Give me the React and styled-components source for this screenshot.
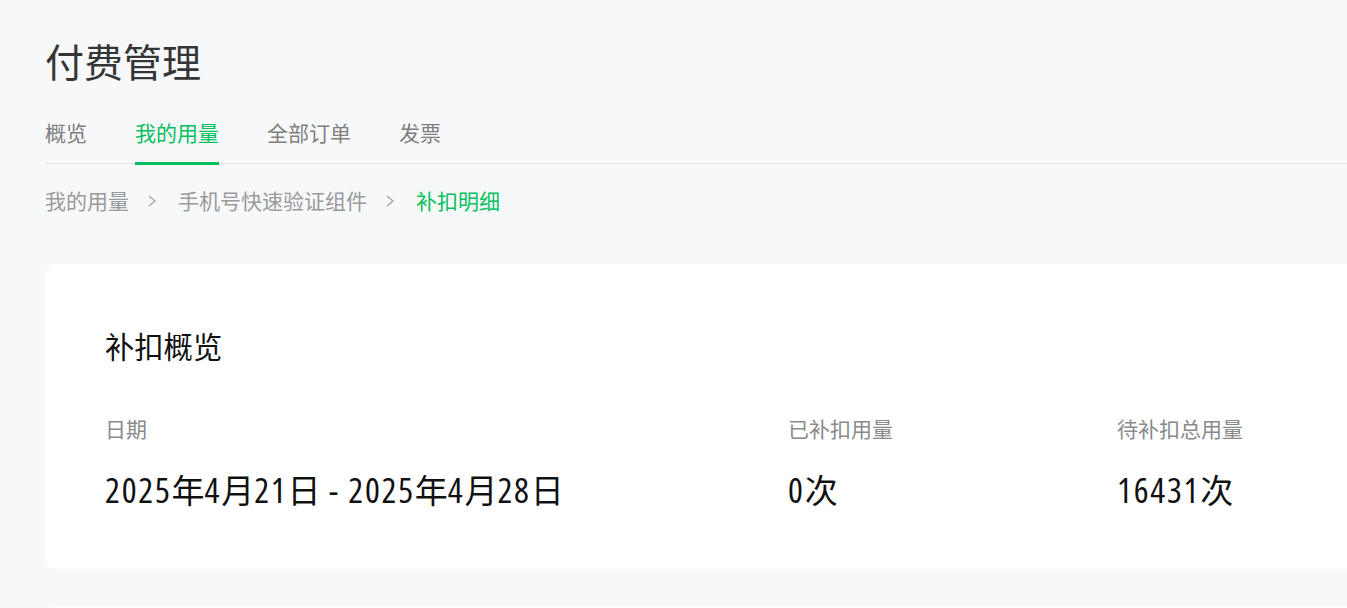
import styled, { createGlobalStyle } from "styled-components";

const GlobalStyle = createGlobalStyle`
  html, body {
    margin: 0;
    padding: 0;
    background: #f7f8fa;
    overflow: hidden;
  }
  body {
    font-family: "Noto Sans", "Noto Sans CJK SC", sans-serif;
    -webkit-font-smoothing: antialiased;
  }
`;

const Page = styled.div`
  width: 1420px;
  padding-left: 45px;
  box-sizing: border-box;
`;

const Title = styled.h1`
  margin: 0;
  padding-top: 34px;
  font-size: 39px;
  line-height: 56px;
  font-weight: 400;
  color: #353535;
`;

const Tabs = styled.div`
  display: flex;
  gap: 48px;
  padding-top: 28px;
  border-bottom: 1px solid #e3e4e6;
`;

const Tab = styled.div`
  font-size: 21px;
  line-height: 30px;
  padding-bottom: 14px;
  margin-bottom: -2px;
  color: ${(props) => (props.active ? "#07c160" : "#7f7f7f")};
  border-bottom: 3px solid
    ${(props) => (props.active ? "#07c160" : "transparent")};
`;

const Crumbs = styled.div`
  display: flex;
  align-items: center;
  padding-top: 22px;
  font-size: 21px;
  line-height: 30px;
`;

const Crumb = styled.span`
  color: ${(props) => (props.current ? "#07c160" : "#9a9a9a")};
`;

const Arrow = styled.svg`
  width: 8px;
  height: 12px;
  margin: 0 22px 0 19px;
`;

const Card = styled.section`
  background: #fff;
  border-radius: 10px;
  margin-top: 48px;
  padding: 62px 60px 57px;
`;

const CardTitle = styled.h2`
  margin: 0;
  font-size: 29.3px;
  line-height: 42px;
  font-weight: 400;
  color: #111;
`;

const Stats = styled.div`
  display: grid;
  grid-template-columns: 683px 329px 1fr;
  margin-top: 46px;
`;

const Label = styled.div`
  font-size: 21px;
  line-height: 30px;
  color: #8a8a8a;
`;

const Value = styled.div`
  margin-top: 23px;
  font-family: "Noto Sans CJK SC", sans-serif;
  font-size: 33px;
  line-height: 44px;
  color: #111;
`;

const Num = styled.span`
  font-family: "Open Sans", "Noto Sans", sans-serif;
  font-stretch: 75%;
  font-size: 35px;
  letter-spacing: 1.75px;
`;

const NextCard = styled.section`
  background: #fff;
  border-radius: 10px;
  margin-top: 37px;
  height: 200px;
`;

const Chevron = () => (
  <Arrow viewBox="0 0 8 12">
    <polyline
      points="1,1 7,6 1,11"
      fill="none"
      stroke="#a6a6a6"
      strokeWidth="1.3"
    />
  </Arrow>
);

const splitDigits = (text) =>
  text
    .split(/([0-9 \-]+)/)
    .filter(Boolean)
    .map((part, i) =>
      /[0-9]/.test(part) || part.trim() === "-" ? (
        <Num key={i}>{part}</Num>
      ) : (
        part
      )
    );

const stats = [
  { label: "日期", value: "2025年4月21日 - 2025年4月28日" },
  { label: "已补扣用量", value: "0次" },
  { label: "待补扣总用量", value: "16431次" },
];

export default function App() {
  return (
    <>
      <GlobalStyle />
      <Page>
        <Title>付费管理</Title>
        <Tabs>
          <Tab>概览</Tab>
          <Tab active>我的用量</Tab>
          <Tab>全部订单</Tab>
          <Tab>发票</Tab>
        </Tabs>
        <Crumbs>
          <Crumb>我的用量</Crumb>
          <Chevron />
          <Crumb>手机号快速验证组件</Crumb>
          <Chevron />
          <Crumb current>补扣明细</Crumb>
        </Crumbs>
        <Card>
          <CardTitle>补扣概览</CardTitle>
          <Stats>
            {stats.map((s) => (
              <div key={s.label}>
                <Label>{s.label}</Label>
                <Value>{splitDigits(s.value)}</Value>
              </div>
            ))}
          </Stats>
        </Card>
        <NextCard />
      </Page>
    </>
  );
}
